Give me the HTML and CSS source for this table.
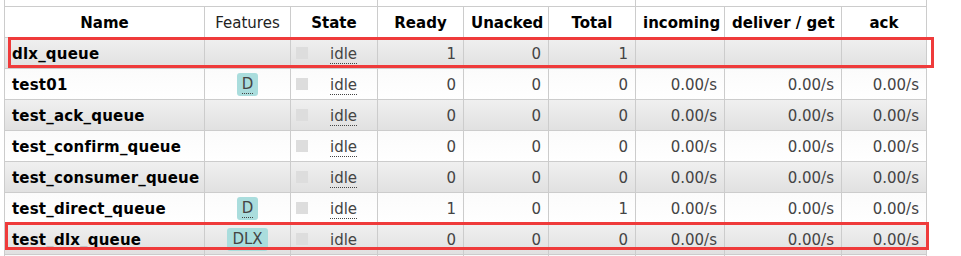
FILE: index.html
```html
<!DOCTYPE html>
<html>
<head>
<meta charset="utf-8">
<link rel="stylesheet" href="styles.css">
</head>
<body>
<div class="page">
  <table class="list">
    <colgroup>
      <col class="w-name"><col class="w-feat"><col class="w-state"><col class="w-ready"><col class="w-unacked"><col class="w-total"><col class="w-in"><col class="w-deliver"><col class="w-ack">
    </colgroup>
    <thead>
      <tr class="group"><th colspan="3"></th><th colspan="3"></th><th colspan="3"></th></tr>
      <tr class="head">
        <th>Name</th><th class="plain">Features</th><th>State</th><th>Ready</th><th>Unacked</th><th>Total</th><th>incoming</th><th>deliver / get</th><th>ack</th>
      </tr>
    </thead>
    <tbody>
      <tr class="alt1">
        <td class="name">dlx_queue</td><td class="c"></td>
        <td><div class="state"><span class="sq"></span><abbr title="idle">idle</abbr></div></td>
        <td class="r">1</td><td class="r">0</td><td class="r">1</td><td class="r"></td><td class="r"></td><td class="r"></td>
      </tr>
      <tr class="alt2">
        <td class="name">test01</td><td class="c"><span class="type"><abbr title="durable">D</abbr></span></td>
        <td><div class="state"><span class="sq"></span><abbr title="idle">idle</abbr></div></td>
        <td class="r">0</td><td class="r">0</td><td class="r">0</td><td class="r">0.00/s</td><td class="r">0.00/s</td><td class="r">0.00/s</td>
      </tr>
      <tr class="alt1">
        <td class="name">test_ack_queue</td><td class="c"></td>
        <td><div class="state"><span class="sq"></span><abbr title="idle">idle</abbr></div></td>
        <td class="r">0</td><td class="r">0</td><td class="r">0</td><td class="r">0.00/s</td><td class="r">0.00/s</td><td class="r">0.00/s</td>
      </tr>
      <tr class="alt2">
        <td class="name">test_confirm_queue</td><td class="c"></td>
        <td><div class="state"><span class="sq"></span><abbr title="idle">idle</abbr></div></td>
        <td class="r">0</td><td class="r">0</td><td class="r">0</td><td class="r">0.00/s</td><td class="r">0.00/s</td><td class="r">0.00/s</td>
      </tr>
      <tr class="alt1">
        <td class="name">test_consumer_queue</td><td class="c"></td>
        <td><div class="state"><span class="sq"></span><abbr title="idle">idle</abbr></div></td>
        <td class="r">0</td><td class="r">0</td><td class="r">0</td><td class="r">0.00/s</td><td class="r">0.00/s</td><td class="r">0.00/s</td>
      </tr>
      <tr class="alt2">
        <td class="name">test_direct_queue</td><td class="c"><span class="type"><abbr title="durable">D</abbr></span></td>
        <td><div class="state"><span class="sq"></span><abbr title="idle">idle</abbr></div></td>
        <td class="r">1</td><td class="r">0</td><td class="r">1</td><td class="r">0.00/s</td><td class="r">0.00/s</td><td class="r">0.00/s</td>
      </tr>
      <tr class="alt1">
        <td class="name">test_dlx_queue</td><td class="c"><span class="type"><abbr title="dead letter exchange">DLX</abbr></span></td>
        <td><div class="state"><span class="sq"></span><abbr title="idle">idle</abbr></div></td>
        <td class="r">0</td><td class="r">0</td><td class="r">0</td><td class="r">0.00/s</td><td class="r">0.00/s</td><td class="r">0.00/s</td>
      </tr>
      <tr class="alt2">
        <td></td><td></td><td></td><td></td><td></td><td></td><td></td><td></td><td></td>
      </tr>
    </tbody>
  </table>
  <div class="mark mark-1"></div>
  <div class="mark mark-2"></div>
</div>
</body>
</html>
```
FILE: styles.css
```css
* { box-sizing: border-box; }

body {
  margin: 0;
  background: #fff;
  font-family: "DejaVu Sans", Verdana, sans-serif;
  font-size: 15px;
  color: #444;
}

.page {
  position: relative;
  height: 256px;
  overflow: hidden;
}

table.list {
  margin: -33px 0 0 4px;
  border-collapse: separate;
  border-spacing: 0;
  table-layout: fixed;
  width: 923px;
  border-left: 1px solid #ccc;
}

.w-name { width: 200px; }
.w-feat { width: 86px; }
.w-state { width: 87px; }
.w-ready { width: 86px; }
.w-unacked { width: 85px; }
.w-total { width: 87px; }
.w-in { width: 89px; }
.w-deliver { width: 117px; }
.w-ack { width: 85px; }

table.list th,
table.list td {
  border-right: 1px solid #ccc;
  border-bottom: 1px solid #ccc;
  padding: 2px 7px 0;
  vertical-align: middle;
  white-space: nowrap;
  overflow: hidden;
}

table.list tr { height: 31px; }
table.list tr.group { height: 40px; }

table.list th {
  background: #fff;
  color: #000;
  font-weight: bold;
  text-align: center;
}

table.list th.plain {
  font-weight: normal;
  color: #222;
}

tr.alt1 { background: linear-gradient(#f0f0f0, #e0e0e0); }
tr.alt2 { background: linear-gradient(#fbfbfb, #fff); }

td.name {
  font-weight: bold;
  color: #000;
  padding-left: 4px;
  letter-spacing: 0.2px;
}

td.c { text-align: center; }
td.r { text-align: right; }

abbr {
  text-decoration: none;
  border-bottom: 1px dotted #444;
}

.type {
  display: inline-block;
  vertical-align: middle;
  background: #add;
  color: #444;
  padding: 3px 5px;
  line-height: 17px;
  border-radius: 3px;
  margin-top: -2px;
}

.state {
  display: flex;
  align-items: center;
  margin-left: -2px;
}

.sq {
  width: 12px;
  height: 12px;
  background: #ddd;
  flex: none;
  margin-top: -2px;
}

.state abbr { margin-left: 22px; }

.mark {
  position: absolute;
  border: 3px solid #ef3b3b;
}

.mark-1 { left: 8px; top: 37px; width: 926px; height: 31px; }
.mark-2 { left: 5px; top: 222px; width: 924px; height: 28px; }
```
